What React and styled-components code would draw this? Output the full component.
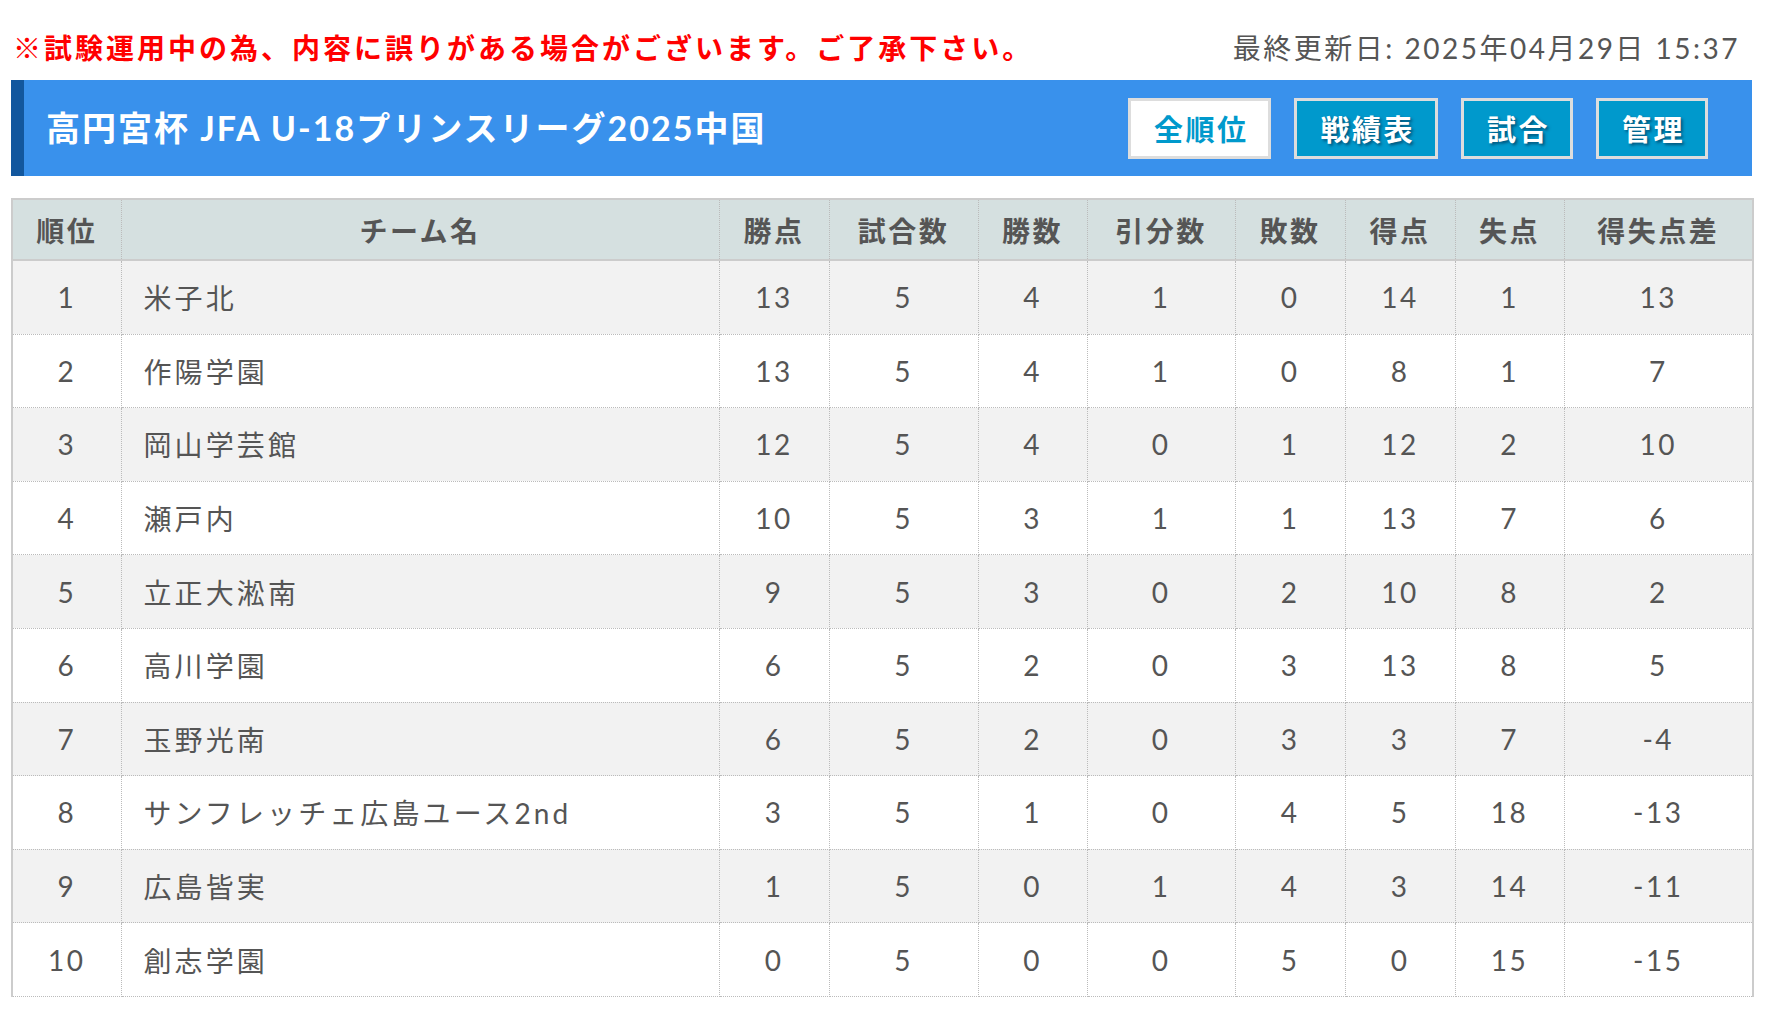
import React from 'react';
import styled, { createGlobalStyle } from 'styled-components';

const GlobalStyle = createGlobalStyle`
  html, body {
    margin: 0;
    padding: 0;
    background: #fff;
  }
  body {
    font-family: Lato, "Noto Sans CJK JP", sans-serif;
    color: #555;
  }
`;

const Page = styled.div`
  padding: 0 17px 0 11px;
`;

const TopRow = styled.div`
  display: flex;
  align-items: center;
  justify-content: space-between;
  height: 80px;
  padding-top: 13px;
  box-sizing: border-box;
`;

const Notice = styled.p`
  margin: 0 0 0 2px;
  color: #f00;
  font-size: 28px;
  font-weight: 700;
  letter-spacing: 3px;
`;

const Updated = styled.p`
  margin: 0 12px 0 0;
  color: #555;
  font-size: 28px;
  letter-spacing: 2.5px;
`;

const TitleBar = styled.div`
  display: flex;
  align-items: center;
  justify-content: space-between;
  height: 96px;
  background-color: #3991ec;
  border-left: 13px solid #12579e;
  padding: 0 44px 0 22px;
  box-sizing: border-box;
`;

const Title = styled.h1`
  margin: 0 0 4px;
  color: #fff;
  font-size: 34px;
  font-weight: 700;
  letter-spacing: 2px;
`;

const Nav = styled.nav`
  display: flex;
  gap: 23px;
`;

const NavButton = styled.a`
  display: flex;
  align-items: center;
  justify-content: center;
  height: 61px;
  padding: 0 20px 0 23px;
  box-sizing: border-box;
  border: 3px solid #ddd;
  background-color: ${(p) => (p.$active ? '#fff' : '#0099cc')};
  color: ${(p) => (p.$active ? '#0099cc' : '#fff')};
  font-size: 29px;
  font-weight: 700;
  letter-spacing: 2.5px;
  text-shadow: ${(p) => (p.$active ? 'none' : '2px 2px 3px rgba(0, 40, 70, 0.6)')};
  cursor: pointer;
`;

const Table = styled.table`
  margin-top: 22px;
  width: 1741px;
  table-layout: fixed;
  border-collapse: collapse;
  border-top: 2px solid #ccc;
  border-left: 2px solid #ccc;
  border-right: 2px solid #ccc;
`;

const HeadCell = styled.th`
  height: 59px;
  padding: 0;
  background-color: #d5e0e0;
  border: 1px dotted #bbb;
  border-bottom: 2px solid #ccc;
  border-top: 2px solid #ccc;
  color: #555;
  font-size: 28px;
  font-weight: 700;
  letter-spacing: 2.5px;
  text-align: center;
`;

const Row = styled.tr`
  background-color: ${(p) => (p.$odd ? '#f2f2f2' : '#fff')};
`;

const Cell = styled.td`
  height: 72.6px;
  padding: ${(p) => (p.$name ? '0 0 0 22px' : '0')};
  border: 1px dotted #bbb;
  color: #555;
  font-size: 28px;
  letter-spacing: ${(p) => (p.$name ? '3.1px' : '2.5px')};
  text-align: ${(p) => (p.$name ? 'left' : 'center')};
  white-space: nowrap;
`;

const columns = [
  { label: '順位', width: 109 },
  { label: 'チーム名', width: 598 },
  { label: '勝点', width: 110 },
  { label: '試合数', width: 149 },
  { label: '勝数', width: 109 },
  { label: '引分数', width: 148 },
  { label: '敗数', width: 110 },
  { label: '得点', width: 110 },
  { label: '失点', width: 109 },
  { label: '得失点差', width: 189 },
];

const standings = [
  [1, '米子北', 13, 5, 4, 1, 0, 14, 1, 13],
  [2, '作陽学園', 13, 5, 4, 1, 0, 8, 1, 7],
  [3, '岡山学芸館', 12, 5, 4, 0, 1, 12, 2, 10],
  [4, '瀬戸内', 10, 5, 3, 1, 1, 13, 7, 6],
  [5, '立正大淞南', 9, 5, 3, 0, 2, 10, 8, 2],
  [6, '高川学園', 6, 5, 2, 0, 3, 13, 8, 5],
  [7, '玉野光南', 6, 5, 2, 0, 3, 3, 7, -4],
  [8, 'サンフレッチェ広島ユース2nd', 3, 5, 1, 0, 4, 5, 18, -13],
  [9, '広島皆実', 1, 5, 0, 1, 4, 3, 14, -11],
  [10, '創志学園', 0, 5, 0, 0, 5, 0, 15, -15],
];

const navItems = ['全順位', '戦績表', '試合', '管理'];

function App() {
  return (
    <Page>
      <GlobalStyle />
      <TopRow>
        <Notice>※試験運用中の為、内容に誤りがある場合がございます。ご了承下さい。</Notice>
        <Updated>最終更新日: 2025年04月29日 15:37</Updated>
      </TopRow>
      <TitleBar>
        <Title>高円宮杯 JFA U-18プリンスリーグ2025中国</Title>
        <Nav>
          {navItems.map((item, i) => (
            <NavButton key={item} $active={i === 0}>{item}</NavButton>
          ))}
        </Nav>
      </TitleBar>
      <Table>
        <colgroup>
          {columns.map((c) => (
            <col key={c.label} style={{ width: c.width }} />
          ))}
        </colgroup>
        <thead>
          <tr>
            {columns.map((c) => (
              <HeadCell key={c.label}>{c.label}</HeadCell>
            ))}
          </tr>
        </thead>
        <tbody>
          {standings.map((row, i) => (
            <Row key={row[0]} $odd={i % 2 === 0}>
              {row.map((value, j) => (
                <Cell key={j} $name={j === 1}>{value}</Cell>
              ))}
            </Row>
          ))}
        </tbody>
      </Table>
    </Page>
  );
}

export default App;
